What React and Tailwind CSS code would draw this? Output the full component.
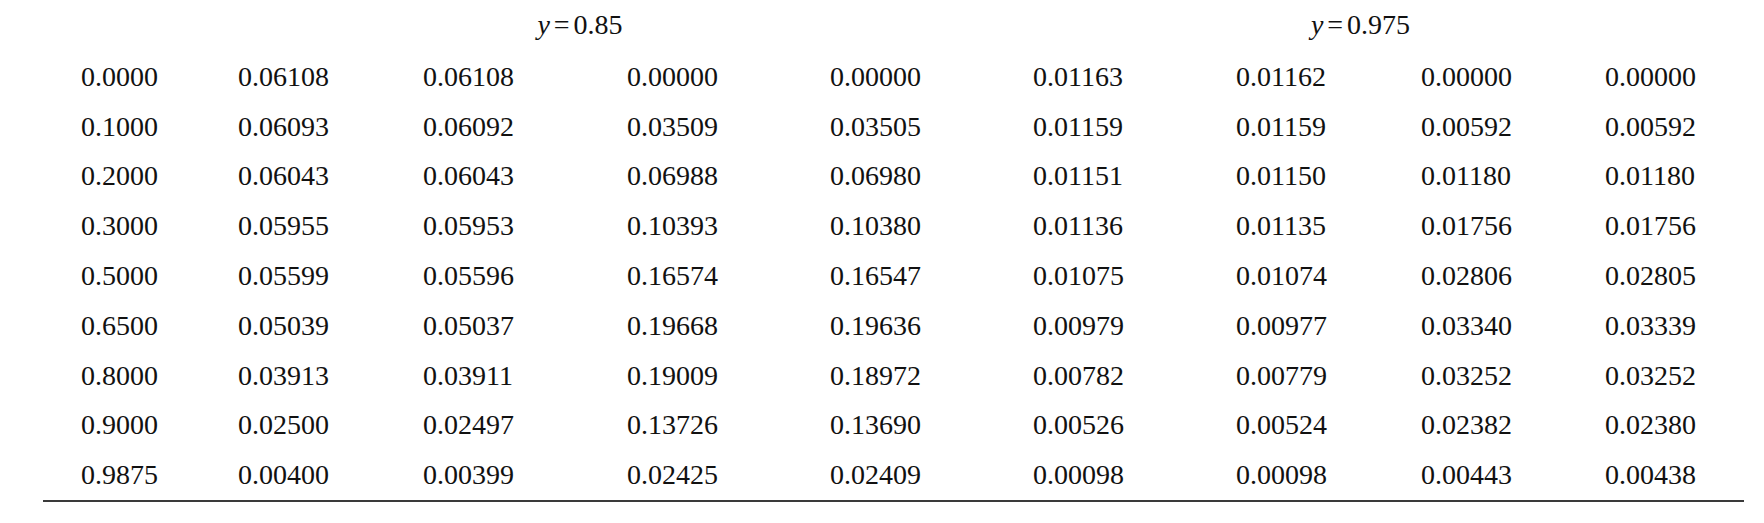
const rows = [
  ['0.0000', '0.06108', '0.06108', '0.00000', '0.00000', '0.01163', '0.01162', '0.00000', '0.00000'],
  ['0.1000', '0.06093', '0.06092', '0.03509', '0.03505', '0.01159', '0.01159', '0.00592', '0.00592'],
  ['0.2000', '0.06043', '0.06043', '0.06988', '0.06980', '0.01151', '0.01150', '0.01180', '0.01180'],
  ['0.3000', '0.05955', '0.05953', '0.10393', '0.10380', '0.01136', '0.01135', '0.01756', '0.01756'],
  ['0.5000', '0.05599', '0.05596', '0.16574', '0.16547', '0.01075', '0.01074', '0.02806', '0.02805'],
  ['0.6500', '0.05039', '0.05037', '0.19668', '0.19636', '0.00979', '0.00977', '0.03340', '0.03339'],
  ['0.8000', '0.03913', '0.03911', '0.19009', '0.18972', '0.00782', '0.00779', '0.03252', '0.03252'],
  ['0.9000', '0.02500', '0.02497', '0.13726', '0.13690', '0.00526', '0.00524', '0.02382', '0.02380'],
  ['0.9875', '0.00400', '0.00399', '0.02425', '0.02409', '0.00098', '0.00098', '0.00443', '0.00438'],
];

function Header({ value }) {
  return (
    <span>
      <i>y</i>
      <span className="mx-[4px]">=</span>
      {value}
    </span>
  );
}

export default function App() {
  return (
    <div
      className="w-[1764px] h-[523px] bg-white text-[#111] text-[28px]"
      style={{ fontFamily: '"Liberation Serif", "Times New Roman", serif' }}
    >
      {/* group headers */}
      <div className="flex h-[52px] pb-[2px] pl-[238px] items-center">
        <div className="w-[684px] text-center">
          <Header value="0.85" />
        </div>
        <div className="ml-[111px] w-[655px] text-center">
          <Header value="0.975" />
        </div>
      </div>

      {/* table body */}
      <div className="ml-[43px] w-[1701px] border-b-2 border-[#3a3a3a]">
        {rows.map((row) => (
          <div
            key={row[0]}
            className="grid grid-cols-[157px_185px_204px_203px_203px_203px_185px_184px_1fr] h-[49.8px] items-center pl-[38px]"
          >
            {row.map((cell, i) => (
              <div key={i} className="whitespace-nowrap">
                {cell}
              </div>
            ))}
          </div>
        ))}
      </div>
    </div>
  );
}
